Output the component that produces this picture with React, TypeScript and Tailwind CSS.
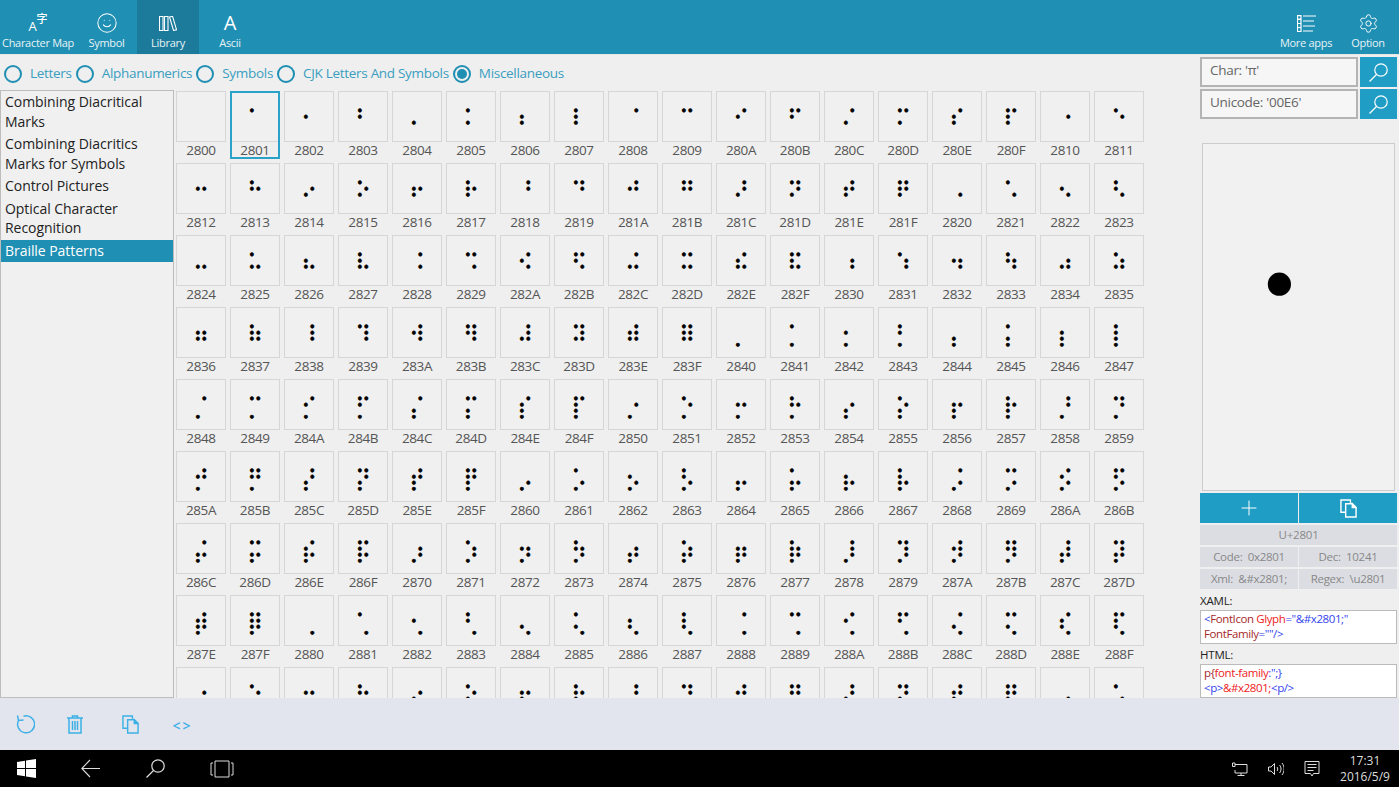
import React, { FC } from 'react'
import { Plus, Settings, Smile } from 'lucide-react'

const CATEGORIES = [
  'Combining Diacritical Marks',
  'Combining Diacritics Marks for Symbols',
  'Control Pictures',
  'Optical Character Recognition',
  'Braille Patterns'
]
const MODES = ['Letters', 'Alphanumerics', 'Symbols', 'CJK Letters And Symbols', 'Miscellaneous']
const CODES = Array.from({ length: 162 }, (_, i) => 0x2800 + i)

const CopyIcon: FC<{ className?: string }> = ({ className }) => (
  <svg viewBox="0 0 18 20" fill="none" stroke="currentColor" strokeWidth="1.5" className={className}>
    <path d="M11 4V1H1v13h5" />
    <path d="M6 5v14h11V9l-4-4z" />
    <path d="M13 5v4h4z" fill="currentColor" />
  </svg>
)

const SearchIcon: FC<{ className?: string }> = ({ className }) => (
  <svg viewBox="0 0 19 19" fill="none" stroke="currentColor" strokeWidth="1.2" className={className}>
    <circle cx="12" cy="7" r="6.2" />
    <path d="M7.500 11.500L0.500 18.500" />
  </svg>
)

const TopButton: FC<{ label: string; active?: boolean; width: string; children: React.ReactNode }> = ({ label, active, width, children }) => (
  <div className={`${width} h-full flex flex-col items-center pt-[13px] ${active ? 'bg-[#1c7a9b]' : ''}`}>
    <div className="h-[20px] flex items-center justify-center">{children}</div>
    <span className="text-[11px] mt-[2px] leading-[16px] tracking-[-0.3px] text-[#e8f3f7] whitespace-nowrap">{label}</span>
  </div>
)

const Cell: FC<{ code: number; selected?: boolean }> = ({ code, selected }) => (
  <div className="relative w-[50px] h-[68px] flex flex-col items-center">
    <div className="w-[50px] h-[51px] shrink-0 bg-[#f0f0f0] border border-[#d6d6d6] flex justify-center items-start pt-[16px]">
      <span className="font-['DejaVu_Serif'] text-[22px] leading-none text-black [-webkit-text-stroke:0.5px_black]">{String.fromCodePoint(code)}</span>
    </div>
    {/* the last row is cut off by the list edge before its label */}
    {code < 0x2890 && (
      <span className="text-[13.5px] leading-[17px] tracking-[-0.4px] text-[#555] whitespace-nowrap">{code.toString(16).toUpperCase()}</span>
    )}
    {selected && <div className="absolute inset-0 border-2 border-[#2ba3c8]" />}
  </div>
)

const App: FC = () => {
  return (
    <div className="w-[1399px] h-[787px] overflow-hidden flex flex-col bg-[#efefef] font-['Open_Sans','Noto_Sans',sans-serif]">
      <div className="h-[55px] shrink-0 bg-[#1f8fb3] border-b border-[#e8e8e8] flex justify-between">
        <div className="flex">
          <TopButton label="Character Map" width="w-[76px]">
            <div className="flex items-start text-white leading-none font-['Open_Sans','Noto_Sans_CJK_SC',sans-serif]">
              <span className="text-[13px] mt-[6px]">A</span>
              <span className="text-[11px] font-medium -mt-[1px]">字</span>
            </div>
          </TopButton>
          <TopButton label="Symbol" width="w-[61px]">
            <Smile className="w-[22px] h-[22px] text-white" strokeWidth={1.1} />
          </TopButton>
          <TopButton label="Library" width="w-[62px]" active>
            <svg viewBox="0 0 18 15" className="w-[18px] h-[15px] text-white" fill="none" stroke="currentColor" strokeWidth="1.1">
              <path d="M.5.500h3.500v14H.5zM5.500.500h3.500v14H5.500zM10.500 1l3-.8 4 13.500-3 .8z" />
            </svg>
          </TopButton>
          <TopButton label="Ascii" width="w-[62px]">
            <span className="text-white text-[20px] leading-none">A</span>
          </TopButton>
        </div>
        <div className="flex">
          <TopButton label="More apps" width="w-[62px]">
            <svg viewBox="0 0 19 17" className="w-[19px] h-[17px] text-white" fill="none" stroke="currentColor" strokeWidth="1.2">
              <path d="M.5.600h3.500v3.400H.5zM.5 4.500h3.500v4H.5zM.5 8.500h3.500v4H.5zM.5 12.500h3.500v4H.5zM6 1h13M6 6h11M6 11h12M6 16h10" />
            </svg>
          </TopButton>
          <TopButton label="Option" width="w-[62px]">
            <Settings className="w-[21px] h-[21px] text-white" strokeWidth={1.1} />
          </TopButton>
        </div>
      </div>

      <div className="flex-1 min-h-0 flex">
        <div className="w-[1199px] shrink-0 flex flex-col">
          <div className="h-[36px] shrink-0 flex items-center pl-[4px] pt-[1px] text-[13.5px] tracking-[-0.3px] text-[#3a9ec0]">
            {MODES.map((mode, i) => (
              <div key={mode} className="flex items-center mr-[4px]">
                <span className="w-[18px] h-[18px] rounded-full border-2 border-[#1f8fb3] flex items-center justify-center">
                  {i === 4 && <span className="w-[10px] h-[10px] rounded-full bg-[#1f8fb3]" />}
                </span>
                <span className="ml-[8px] whitespace-nowrap">{mode}</span>
              </div>
            ))}
          </div>
          <div className="flex-1 min-h-0 flex">
            <div className="w-[174px] -mt-[1px] shrink-0 border border-[#bdbdbd] bg-[#f0f0f0] text-[14px] leading-[19.5px] tracking-[-0.05px] text-[#222]">
              {CATEGORIES.map((cat, i) => (
                <div key={cat} className={`px-[4px] pt-[1px] pb-[2px] ${i === 4 ? 'bg-[#1f8fb3] text-white' : ''}`}>{cat}</div>
              ))}
            </div>
            <div className="flex-1 min-w-0 overflow-hidden pl-[2px]">
              <div className="grid grid-cols-[repeat(18,50px)] gap-[4px]">
                {CODES.map((code) => (
                  <Cell key={code} code={code} selected={code === 0x2801} />
                ))}
              </div>
            </div>
          </div>
        </div>

        <div className="flex-1 min-w-0 flex flex-col pl-[1px] pr-[2px] pt-[2px]">
          <div className="flex gap-[2px] h-[30px]">
            <div className="w-[158px] bg-[#f6f6f6] border-2 border-[#b4b4b4] text-[13.5px] tracking-[-0.3px] text-[#666] px-[8px] leading-[22px]">Char: 'π'</div>
            <div className="flex-1 bg-[#1f9dc4] flex items-center justify-center"><SearchIcon className="w-[19px] h-[19px] text-white" /></div>
          </div>
          <div className="flex gap-[2px] h-[30px] mt-[2px]">
            <div className="w-[158px] bg-[#f6f6f6] border-2 border-[#b4b4b4] text-[13.5px] tracking-[-0.3px] text-[#666] px-[8px] leading-[22px]">Unicode: '00E6'</div>
            <div className="flex-1 bg-[#1f9dc4] flex items-center justify-center"><SearchIcon className="w-[19px] h-[19px] text-white" /></div>
          </div>
          <div className="mx-[2px] mt-[24px] h-[348px] shrink-0 bg-[#f1f1f1] border border-[#ccc] flex items-center justify-center overflow-hidden pt-[38px] pl-[4px]">
            <span className="font-['DejaVu_Serif'] text-[144px] leading-none text-black">{'\u2801'}</span>
          </div>
          <div className="flex gap-[1px] h-[30px] mt-[2px] text-white">
            <div className="flex-1 bg-[#1f9dc4] flex items-center justify-center"><Plus className="w-[24px] h-[24px]" strokeWidth={1} /></div>
            <div className="flex-1 bg-[#1f9dc4] flex items-center justify-center"><CopyIcon className="w-[17px] h-[19px]" /></div>
          </div>
          <div className="mt-[2px] h-[20px] bg-[#dcdde3] text-[11.5px] tracking-[-0.2px] text-[#888] flex items-center justify-center">U+2801</div>
          <div className="mt-[2px] grid grid-cols-2 gap-x-[1px] gap-y-[2px] text-[11.5px] tracking-[-0.3px] text-[#888]">
            <div className="h-[20px] bg-[#dcdde3] flex items-center justify-center whitespace-pre">Code:  0x2801</div>
            <div className="h-[20px] bg-[#dcdde3] flex items-center justify-center whitespace-pre">Dec:  10241</div>
            <div className="h-[20px] bg-[#dcdde3] flex items-center justify-center whitespace-pre">Xml:  &amp;#x2801;</div>
            <div className="h-[20px] bg-[#dcdde3] flex items-center justify-center whitespace-pre">Regex:  \u2801</div>
          </div>
          <div className="text-[11.5px] leading-[16px] mt-[4px] tracking-[-0.2px] text-[#222]">XAML:</div>
          <div className="h-[34px] mt-[1px] bg-white border border-[#bbb] text-[11.5px] leading-[15px] tracking-[-0.4px] px-[3px] whitespace-nowrap">
            <div><span className="text-[#3344ee]">&lt;</span><span className="text-[#a52a2a]">FontIcon </span><span className="text-[#ee2222]">Glyph</span><span className="text-[#3344ee]">="&amp;#x2801;"</span></div>
            <div><span className="text-[#a52a2a]">FontFamily</span><span className="text-[#3344ee]">=""/&gt;</span></div>
          </div>
          <div className="text-[11.5px] leading-[16px] mt-[3px] tracking-[-0.2px] text-[#222]">HTML:</div>
          <div className="h-[34px] mt-[1px] bg-white border border-[#bbb] text-[11.5px] leading-[15px] tracking-[-0.4px] px-[3px] whitespace-nowrap">
            <div><span className="text-[#a52a2a]">p{'{'}</span><span className="text-[#ee2222]">font-family</span><span className="text-[#3344ee]">:'';{'}'}</span></div>
            <div><span className="text-[#3344ee]">&lt;p&gt;</span><span className="text-[#ee2222]">&amp;#x2801;</span><span className="text-[#3344ee]">&lt;p/&gt;</span></div>
          </div>
        </div>
      </div>

      <div className="h-[52px] shrink-0 bg-[#e2e4ee] flex items-center text-[#3db1e6]">
        <div className="w-[50px] flex justify-center">
          <svg viewBox="0 0 20 20" className="w-[20px] h-[20px]" fill="none" stroke="currentColor" strokeWidth="1.5">
            <path d="M8.500 2.200A8.500 8.500 0 1 1 3.500 6.500M2.500 1.500L3.500 6.500L8.500 6" />
          </svg>
        </div>
        <div className="w-[50px] flex justify-center">
          <svg viewBox="0 0 16 19" className="w-[16px] h-[19px]" fill="none" stroke="currentColor" strokeWidth="1.5">
            <path d="M0 3h16M5.500 3V1h5v2M2 3v15h12V3M5.500 6v9M8 6v9M10.500 6v9" />
          </svg>
        </div>
        <div className="w-[60px] flex justify-center"><CopyIcon className="w-[17px] h-[19px]" /></div>
        <div className="w-[45px] flex justify-center pt-[3px] text-[14px] leading-[16px] font-semibold tracking-[2px]">&lt;&gt;</div>
      </div>

      <div className="h-[37px] shrink-0 bg-black flex items-center text-[#ddd]">
        <div className="w-[52px] flex justify-center">
          <svg viewBox="0 0 19 19" className="w-[19px] h-[19px]" fill="white">
            <path d="M0 3l8-1.200V9H0zM9 1.600L19 0v9H9zM0 10h8v7.200L0 16zM9 10h10v9L9 17.400z" />
          </svg>
        </div>
        <div className="w-[76px] flex justify-center">
          <svg viewBox="0 0 19 19" className="w-[19px] h-[19px]" fill="none" stroke="currentColor" strokeWidth="1.1">
            <path d="M9 1L.8 9.500 9 18M.8 9.500H19" />
          </svg>
        </div>
        <div className="w-[55px] flex justify-center"><SearchIcon className="w-[19px] h-[19px]" /></div>
        <div className="w-[78px] flex justify-center">
          <svg viewBox="0 0 24 18" className="w-[24px] h-[18px]" fill="none" stroke="currentColor">
            <path d="M5 1h14v16H5zM3 3H1v12h2M21 3h2v12h-2" />
          </svg>
        </div>
        <div className="flex-1" />
        <svg viewBox="0 0 16 14" className="w-[16px] h-[14px] mr-[20px]" fill="none" stroke="currentColor">
          <path d="M3 2.500h12v8.500H3V8M9 11v2.500M5.500 13.500h7M.5 1h2.500v3.500H.5z" />
        </svg>
        <svg viewBox="0 0 16 14" className="w-[16px] h-[14px] mr-[20px]" fill="none" stroke="currentColor">
          <path d="M.5 5v4h2.500l3.500 3.500v-11L3 5zM9 5c1 1.200 1 2.800 0 4M11.500 3c2 2.400 2 5.600 0 8M14 1c2.800 3.600 2.800 8.400 0 12" />
        </svg>
        <svg viewBox="0 0 16 16" className="w-[16px] h-[16px] mr-[19px]" fill="none" stroke="currentColor">
          <path d="M1 .500h14v12H9.500L8 15l-1.500-2.500H1zM3.500 3.500h9M3.500 6.500h9M3.500 9.500h6" />
        </svg>
        <div className="w-[52px] mr-[8px] text-center text-[12px] leading-[16px] text-[#ddd]">
          <div>17:31</div>
          <div>2016/5/9</div>
        </div>
      </div>
    </div>
  )
}

export default App
